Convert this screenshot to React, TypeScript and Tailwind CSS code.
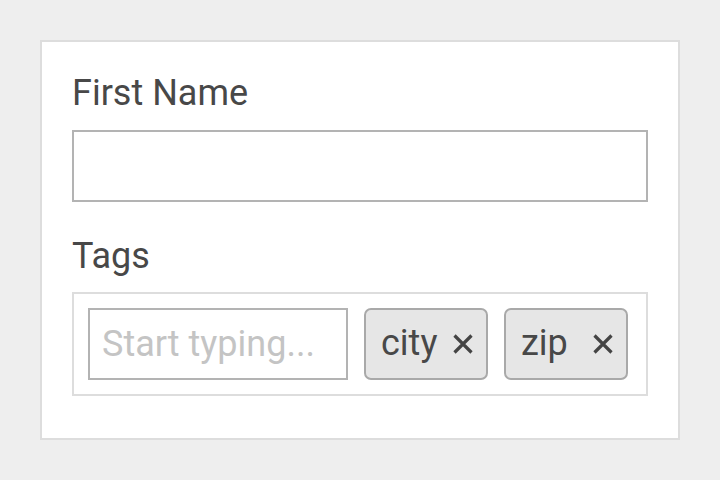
import { useState } from "react";

function CloseIcon() {
  return (
    <svg width="24" height="24" viewBox="0 0 24 24" className="shrink-0">
      <path d="M3.5 3.5 L20.5 20.5 M20.5 3.5 L3.5 20.5" stroke="#444" strokeWidth="3.2" />
    </svg>
  );
}

function Chip({ label }: { label: string }) {
  return (
    <div className="flex h-[72px] w-[124px] items-center justify-between rounded-[7px] border-2 border-[#a9a9a9] bg-[#e6e6e6] pl-[15px] pr-[11px]">
      <span className="pb-[2px] text-[36px] leading-none text-[#484848]">{label}</span>
      <CloseIcon />
    </div>
  );
}

export default function App() {
  const [tags] = useState(["city", "zip"]);

  return (
    <div
      className="flex h-[480px] w-[720px] items-start bg-[#eeeeee] pl-[40px] pt-[40px]"
      style={{ fontFamily: "Roboto, 'Noto Sans', sans-serif" }}
    >
      <div className="flex h-[400px] w-[640px] flex-col border-2 border-[#dddddd] bg-white px-[30px] pt-[33px]">
        <label className="mb-[19px] text-[36px] leading-none text-[#484848]">First Name</label>
        <input className="h-[72px] w-[576px] border-2 border-[#b3b3b3] outline-none" />

        <label className="mt-[36px] mb-[18px] text-[36px] leading-none text-[#484848]">Tags</label>
        <div className="flex h-[104px] w-[576px] items-center gap-[16px] border-2 border-[#dddddd] px-[14px]">
          <input
            placeholder="Start typing..."
            className="h-[72px] w-[260px] border-2 border-[#b3b3b3] px-[12px] text-[36px] text-[#444] outline-none placeholder:text-[#c4c4c4]"
          />
          {tags.map((t) => (
            <Chip key={t} label={t} />
          ))}
        </div>
      </div>
    </div>
  );
}
